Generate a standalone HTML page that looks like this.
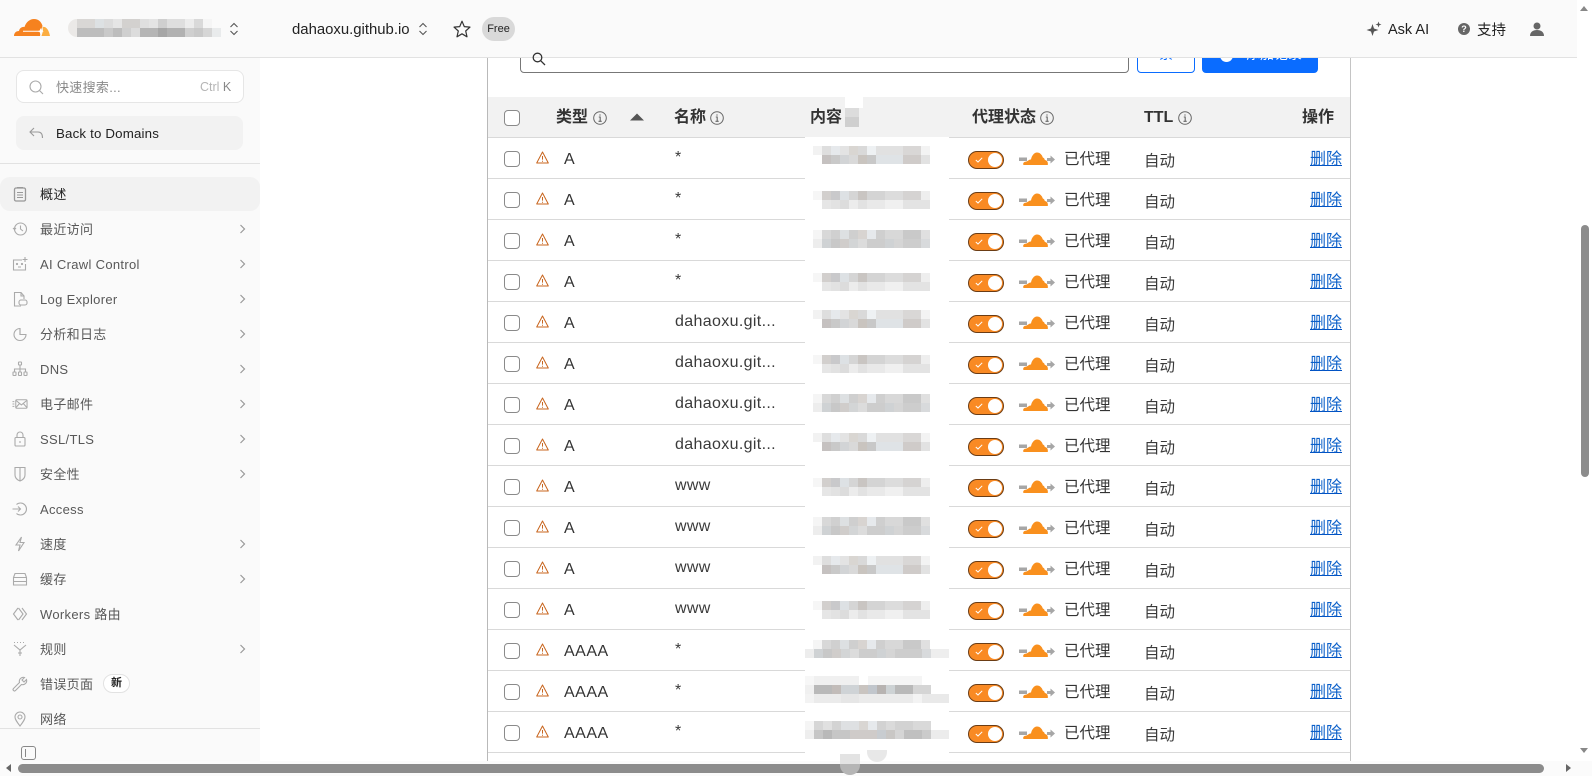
<!DOCTYPE html>
<html lang="zh"><head><meta charset="utf-8"><title>DNS</title>
<style>
*{box-sizing:border-box}
html,body{margin:0;width:1592px;height:776px;overflow:hidden;background:#fff;font-family:"Liberation Sans","Noto Sans CJK SC",sans-serif;color:#333}
.a{position:absolute}
svg{position:absolute;display:block;overflow:visible}
#side{left:0;top:0;width:260px;height:761px;background:#fafafa;overflow:hidden}
.mi{position:absolute;left:0;width:260px;height:34px;line-height:35px;padding-left:40px;font-size:13px;letter-spacing:.32px;color:#585858;white-space:nowrap}
.mi svg.ic{left:12px;top:9px;width:16px;height:16px;fill:none;stroke:#aaa;stroke-width:1.1}
.mi svg.ch{left:238px;top:12px;width:9px;height:10px;fill:none;stroke:#999;stroke-width:1.2}
#hd{left:260px;top:0;width:1317px;height:58px;background:#fafafa;border-bottom:1px solid #e2e2e2;z-index:5}
.th{position:absolute;top:97px;height:41px;left:488px;width:862px;background:#f2f2f2;border-bottom:1px solid #d9d9d9}
.tx{position:absolute;font-weight:700;font-size:16px;line-height:22px;top:107px;color:#333;white-space:nowrap}
.inf{width:14px;height:14px;top:111px;fill:none;stroke:#666;stroke-width:1}
.r{position:absolute;left:0;width:1351px;height:41px}
.r .ln{position:absolute;left:488px;width:862px;top:40px;height:1px;background:#d9d9d9}
.cb{position:absolute;left:504px;top:13px;width:16px;height:16px;border:1.3px solid #8a8a8a;border-radius:4px;background:#fff}
.t{position:absolute;white-space:nowrap;line-height:20px}
.ty{left:564px;top:12px;font-size:16px;letter-spacing:.5px;color:#333}
.nm{left:675px;top:10px;font-size:16px;letter-spacing:.35px;color:#3a3a3a}
.pr{left:1064px;top:12px;font-size:15.5px;color:#333}
.au{left:1144px;top:14px;font-size:15.5px;color:#3a3a3a}
.de{left:1310px;top:12px;font-size:16px;color:#0a5fc9;border-bottom:1.5px solid #0051c3;height:16px;line-height:20px}
.w{left:536px;top:13px;width:13px;height:13px;fill:none;stroke:#c8651e;stroke-width:1}
.tg{position:absolute;left:968px;top:13px;width:36px;height:18px;border-radius:9px;background:#f98a24;border:1.3px solid #6b3c14}
.tg i{position:absolute;right:1px;top:1px;width:14px;height:14px;border-radius:50%;background:#fff}
.tg svg{left:6px;top:5px;width:8px;height:6px;fill:none;stroke:#fff;stroke-width:1}
.cl{left:1019px;top:14px;width:36px;height:13px}
.m{position:absolute;left:805px;top:-1px;width:144px;height:43px;background-color:#fff;background-repeat:no-repeat}
.p1{background-image:linear-gradient(90deg,#f2f2f2 0 9px,#dedede 0 18px,#e6e9ec 0 27px,#e3e3e3 0 36px,#d9d6d2 0 45px,#d9d9d9 0 54px,#eef1f3 0 63px,#e1e1e1 0 90px,#d9d7d6 0 108px,#f3f3f3 0 117px),linear-gradient(90deg,#fff 0 9px,#c5c1c0 0 18px,#c9c9c9 0 27px,#d2d4d6 0 36px,#d9d9d9 0 45px,#c9c4bf 0 54px,#c8c8c8 0 63px,#dfe3e6 0 90px,#cfcbc9 0 108px,#e2e2e2 0 117px);background-size:117px 9px,117px 9px;background-position:8px 9px,8px 18px}
.p2{background-image:linear-gradient(90deg,#f6f6f6 0 9px,#d2cfcd 0 18px,#c9c9cb 0 27px,#dde1e4 0 36px,#d5d5d5 0 45px,#c9c5c2 0 54px,#d4d4d4 0 72px,#dcdcdc 0 90px,#d5d3d2 0 108px,#eeeeee 0 117px),linear-gradient(90deg,#fff 0 9px,#e6e6e6 0 18px,#e2e2e2 0 27px,#dcdcdc 0 36px,#ececec 0 45px,#e2e2e2 0 54px,#e9e9e9 0 72px,#f0f0f0 0 90px,#e3e3e3 0 117px);background-size:117px 9px,117px 9px;background-position:8px 13px,8px 22px}
.p3{background-image:linear-gradient(90deg,#f5f5f5 0 9px,#d8d8d8 0 18px,#d0d0d0 0 27px,#dde0e2 0 36px,#cfcfcf 0 45px,#d8d4d1 0 54px,#e6e9ec 0 63px,#cfcfcf 0 72px,#d8d8d8 0 90px,#c9c9c9 0 108px,#e0e0e0 0 117px),linear-gradient(90deg,#ededed 0 9px,#cfd2d4 0 18px,#c8c8c8 0 27px,#d0cdcb 0 36px,#d3d5d6 0 45px,#dcdcdc 0 54px,#cdcdcd 0 72px,#cfd2d4 0 81px,#d5d5d5 0 90px,#cdcdcd 0 108px,#d8dadc 0 117px);background-size:117px 9px,117px 9px;background-position:8px 11px,8px 20px}
.p6{background-image:linear-gradient(90deg,#f5f5f5 0 9px,#d8d8d8 0 18px,#d0d0d0 0 27px,#dde0e2 0 36px,#cfcfcf 0 45px,#d8d4d1 0 54px,#e6e9ec 0 63px,#cfcfcf 0 72px,#d8d8d8 0 90px,#c9c9c9 0 108px,#e0e0e0 0 117px),linear-gradient(90deg,#ededed 0 9px,#cfd2d4 0 18px,#c8c8c8 0 27px,#d0cdcb 0 36px,#d3d5d6 0 45px,#dcdcdc 0 54px,#cdcdcd 0 72px,#cfd2d4 0 81px,#d5d5d5 0 90px,#cdcdcd 0 117px,#d8dadc 0 126px,#eeeeee 0 144px);background-size:117px 9px,144px 9px;background-position:8px 11px,0 20px}
.p4{background-image:linear-gradient(90deg,#f7f7f7 0 9px,#f0f0f0 0 54px,#fff 0 63px,#f5f5f5 0 108px),linear-gradient(90deg,#f0f0f0 0 9px,#b9b9b9 0 27px,#c2bcb9 0 36px,#cfd3d6 0 54px,#c9c4c0 0 63px,#c1c6cc 0 72px,#b7b3b1 0 81px,#cdd2d4 0 90px,#b9b9b9 0 108px,#d5d5d5 0 126px),linear-gradient(90deg,#f3f3f3 0 9px,#ebebeb 0 36px,#e6e6e6 0 54px,#ebebeb 0 108px,#f3f3f3 0 117px,#e9e9e9 0 144px);background-size:117px 9px,126px 9px,144px 9px;background-position:0 6px,0 15px,0 24px}
.p5{background-image:linear-gradient(90deg,#f5f5f5 0 9px,#d6d6d6 0 18px,#e0e0e0 0 27px,#d3d3d3 0 36px,#dee0e2 0 54px,#d9d6d3 0 63px,#e6e9ec 0 72px,#d2d2d2 0 81px,#dadada 0 90px,#d2d2d2 0 108px,#d9d9d9 0 126px),linear-gradient(90deg,#eeeeee 0 9px,#c6c6c6 0 18px,#b9b9b9 0 27px,#c6c6c6 0 45px,#cfcbc9 0 72px,#c8ccd0 0 81px,#c9c7c5 0 90px,#d5d5d5 0 99px,#c0c0c0 0 117px,#cbcbcb 0 126px,#ececec 0 144px);background-size:126px 9px,144px 9px;background-position:0 10px,0 19px}
</style></head><body>
<svg width="0" height="0" style="position:absolute"><defs>
<symbol id="warn" viewBox="0 0 13 13"><path d="M6.500 1 12.300 12H.7Z" stroke-linejoin="round"/><path d="M6.500 5v3.600M6.500 9.800v1"/></symbol>
<symbol id="chk" viewBox="0 0 8 6"><path d="M.8 3 3 5 7.200.8"/></symbol>
<symbol id="cld" viewBox="0 0 36 13"><path d="M0 5.500h8v3.500H0zM28 6h4v3h-4z" fill="#a6a6a6"/><path d="M31.500 3.500 36 7.500l-4.500 4z" fill="#a6a6a6"/><path d="M4.500 13c-.8-1.500 0-3 2-3.300 1.500-.2 2.500-1 3.500-1.700.6-.4 1.300-.6 2-.5C12.600 4 15 .5 18 .5c3 0 5.200 2.500 5.800 5 1.200.4 1.800 1.200 2 2.500 1.700.2 3.500 1.500 3 5Z" fill="#f9901e"/></symbol>
<symbol id="chv" viewBox="0 0 9 10"><path d="M2.500 1 6.500 5l-4 4"/></symbol>
<symbol id="info" viewBox="0 0 14 14"><circle cx="7" cy="7" r="6.300"/><path d="M5.800 6h1.400v4.200M5.500 10.300h3.200M7 3.400v1.200" stroke-width="1.100"/></symbol>
<symbol id="ud" viewBox="0 0 10 14"><path d="M1.500 5 5 1.500 8.500 5M1.500 9 5 12.500 8.500 9"/></symbol>
</defs></svg>

<!-- main background content -->
<div class="a" style="left:487px;top:57px;width:1px;height:704px;background:#b9b9b9"></div>
<div class="a" style="left:1350px;top:57px;width:1px;height:704px;background:#c4c4c4"></div>
<div class="a" style="left:520px;top:40px;width:609px;height:33px;border:1.2px solid #777;border-radius:4px;background:#fff"></div>
<svg class="a" style="left:531px;top:51px;width:16px;height:16px;fill:none;stroke:#333;stroke-width:1.300;z-index:6" viewBox="0 0 16 16"><circle cx="6.500" cy="6.500" r="4.300"/><path d="M9.800 9.800 14 14"/></svg>
<div class="a" style="left:1137px;top:40px;width:58px;height:33px;border:1.200px solid #0a6cff;border-radius:4px;background:#fff;text-align:center;color:#0a6cff;font-size:14px;line-height:26px;overflow:hidden">索</div>
<div class="a" style="left:1202px;top:40px;width:116px;height:33px;background:#0a6cff;border-radius:4px;color:#fff;font-size:14px;line-height:28px;padding-left:44px;overflow:hidden;white-space:nowrap">添加记录<span class="a" style="left:18px;top:9px;width:13px;height:13px;border-radius:50%;background:#fff"></span></div>

<div class="th"></div>
<div class="a" style="left:504px;top:110px;width:16px;height:16px;border:1.300px solid #8a8a8a;border-radius:4px;background:#fff"></div>
<div class="tx" style="left:556px">类型</div>
<svg class="inf" style="left:593px"><use href="#info"/></svg>
<svg class="a" style="left:630px;top:113px;width:14px;height:8px" viewBox="0 0 14 8"><path d="M7 .5 14 7.500H0Z" fill="#555"/></svg>
<div class="tx" style="left:674px">名称</div>
<svg class="inf" style="left:710px"><use href="#info"/></svg>
<div class="tx" style="left:810px">内容</div>
<div class="a" style="left:845px;top:92px;width:18px;height:16px;background:#fff"></div>
<div class="a" style="left:845px;top:108px;width:14px;height:19px;background:linear-gradient(#dcdcdc 0 9px,#cfcfcf 0)"></div>
<div class="tx" style="left:972px">代理状态</div>
<svg class="inf" style="left:1040px"><use href="#info"/></svg>
<div class="tx" style="left:1144px">TTL</div>
<svg class="inf" style="left:1178px"><use href="#info"/></svg>
<div class="tx" style="left:1302px">操作</div>

<div class="r" style="top:138px"><div class="ln"></div><div class="m p1"></div><div class="cb"></div><svg class="w"><use href="#warn"/></svg><div class="t ty">A</div><div class="t nm">*</div><div class="tg"><svg><use href="#chk"/></svg><i></i></div><svg class="cl"><use href="#cld"/></svg><div class="t pr">已代理</div><div class="t au">自动</div><div class="t de">删除</div></div>
<div class="r" style="top:179px"><div class="ln"></div><div class="m p2"></div><div class="cb"></div><svg class="w"><use href="#warn"/></svg><div class="t ty">A</div><div class="t nm">*</div><div class="tg"><svg><use href="#chk"/></svg><i></i></div><svg class="cl"><use href="#cld"/></svg><div class="t pr">已代理</div><div class="t au">自动</div><div class="t de">删除</div></div>
<div class="r" style="top:220px"><div class="ln"></div><div class="m p3"></div><div class="cb"></div><svg class="w"><use href="#warn"/></svg><div class="t ty">A</div><div class="t nm">*</div><div class="tg"><svg><use href="#chk"/></svg><i></i></div><svg class="cl"><use href="#cld"/></svg><div class="t pr">已代理</div><div class="t au">自动</div><div class="t de">删除</div></div>
<div class="r" style="top:261px"><div class="ln"></div><div class="m p2"></div><div class="cb"></div><svg class="w"><use href="#warn"/></svg><div class="t ty">A</div><div class="t nm">*</div><div class="tg"><svg><use href="#chk"/></svg><i></i></div><svg class="cl"><use href="#cld"/></svg><div class="t pr">已代理</div><div class="t au">自动</div><div class="t de">删除</div></div>
<div class="r" style="top:302px"><div class="ln"></div><div class="m p1"></div><div class="cb"></div><svg class="w"><use href="#warn"/></svg><div class="t ty">A</div><div class="t nm">dahaoxu.git...</div><div class="tg"><svg><use href="#chk"/></svg><i></i></div><svg class="cl"><use href="#cld"/></svg><div class="t pr">已代理</div><div class="t au">自动</div><div class="t de">删除</div></div>
<div class="r" style="top:343px"><div class="ln"></div><div class="m p2"></div><div class="cb"></div><svg class="w"><use href="#warn"/></svg><div class="t ty">A</div><div class="t nm">dahaoxu.git...</div><div class="tg"><svg><use href="#chk"/></svg><i></i></div><svg class="cl"><use href="#cld"/></svg><div class="t pr">已代理</div><div class="t au">自动</div><div class="t de">删除</div></div>
<div class="r" style="top:384px"><div class="ln"></div><div class="m p3"></div><div class="cb"></div><svg class="w"><use href="#warn"/></svg><div class="t ty">A</div><div class="t nm">dahaoxu.git...</div><div class="tg"><svg><use href="#chk"/></svg><i></i></div><svg class="cl"><use href="#cld"/></svg><div class="t pr">已代理</div><div class="t au">自动</div><div class="t de">删除</div></div>
<div class="r" style="top:425px"><div class="ln"></div><div class="m p1"></div><div class="cb"></div><svg class="w"><use href="#warn"/></svg><div class="t ty">A</div><div class="t nm">dahaoxu.git...</div><div class="tg"><svg><use href="#chk"/></svg><i></i></div><svg class="cl"><use href="#cld"/></svg><div class="t pr">已代理</div><div class="t au">自动</div><div class="t de">删除</div></div>
<div class="r" style="top:466px"><div class="ln"></div><div class="m p2"></div><div class="cb"></div><svg class="w"><use href="#warn"/></svg><div class="t ty">A</div><div class="t nm">www</div><div class="tg"><svg><use href="#chk"/></svg><i></i></div><svg class="cl"><use href="#cld"/></svg><div class="t pr">已代理</div><div class="t au">自动</div><div class="t de">删除</div></div>
<div class="r" style="top:507px"><div class="ln"></div><div class="m p3"></div><div class="cb"></div><svg class="w"><use href="#warn"/></svg><div class="t ty">A</div><div class="t nm">www</div><div class="tg"><svg><use href="#chk"/></svg><i></i></div><svg class="cl"><use href="#cld"/></svg><div class="t pr">已代理</div><div class="t au">自动</div><div class="t de">删除</div></div>
<div class="r" style="top:548px"><div class="ln"></div><div class="m p1"></div><div class="cb"></div><svg class="w"><use href="#warn"/></svg><div class="t ty">A</div><div class="t nm">www</div><div class="tg"><svg><use href="#chk"/></svg><i></i></div><svg class="cl"><use href="#cld"/></svg><div class="t pr">已代理</div><div class="t au">自动</div><div class="t de">删除</div></div>
<div class="r" style="top:589px"><div class="ln"></div><div class="m p2"></div><div class="cb"></div><svg class="w"><use href="#warn"/></svg><div class="t ty">A</div><div class="t nm">www</div><div class="tg"><svg><use href="#chk"/></svg><i></i></div><svg class="cl"><use href="#cld"/></svg><div class="t pr">已代理</div><div class="t au">自动</div><div class="t de">删除</div></div>
<div class="r" style="top:630px"><div class="ln"></div><div class="m p6"></div><div class="cb"></div><svg class="w"><use href="#warn"/></svg><div class="t ty">AAAA</div><div class="t nm">*</div><div class="tg"><svg><use href="#chk"/></svg><i></i></div><svg class="cl"><use href="#cld"/></svg><div class="t pr">已代理</div><div class="t au">自动</div><div class="t de">删除</div></div>
<div class="r" style="top:671px"><div class="ln"></div><div class="m p4"></div><div class="cb"></div><svg class="w"><use href="#warn"/></svg><div class="t ty">AAAA</div><div class="t nm">*</div><div class="tg"><svg><use href="#chk"/></svg><i></i></div><svg class="cl"><use href="#cld"/></svg><div class="t pr">已代理</div><div class="t au">自动</div><div class="t de">删除</div></div>
<div class="r" style="top:712px"><div class="ln"></div><div class="m p5"></div><div class="cb"></div><svg class="w"><use href="#warn"/></svg><div class="t ty">AAAA</div><div class="t nm">*</div><div class="tg"><svg><use href="#chk"/></svg><i></i></div><svg class="cl"><use href="#cld"/></svg><div class="t pr">已代理</div><div class="t au">自动</div><div class="t de">删除</div></div>

<!-- top header -->
<div class="a" id="hd">
<div class="a" style="left:32px;top:20px;font-size:14.900px;line-height:20px;color:#222;white-space:nowrap">dahaoxu.github.io</div>
<svg style="left:158px;top:22px;width:10px;height:14px;fill:none;stroke:#555;stroke-width:1.100"><use href="#ud"/></svg>
<svg style="left:193px;top:20px;width:18px;height:18px;fill:none;stroke:#333;stroke-width:1.200" viewBox="0 0 18 18"><path d="M9 1.200 11.300 6.600 17 7.100 12.700 11 14 16.800 9 13.800 4 16.800 5.300 11 1 7.100 6.700 6.600Z" stroke-linejoin="round"/></svg>
<div class="a" style="left:222px;top:17px;width:33px;height:24px;border-radius:12px;background:#d9d9d9;font-size:11px;line-height:25px;text-align:center;color:#222">Free</div>
<svg style="left:1106px;top:21px;width:16px;height:16px;fill:#555" viewBox="0 0 16 16"><path d="M6.500 3 8 7.500 12.500 9 8 10.500 6.500 15 5 10.500.5 9 5 7.500ZM12.500.5l.8 2.200 2.200.8-2.200.8-.8 2.200-.8-2.200-2.200-.8 2.200-.8Z"/></svg>
<div class="a" style="left:1128px;top:20px;font-size:14.500px;line-height:20px;color:#222;white-space:nowrap">Ask AI</div>
<div class="a" style="left:1198px;top:23px;width:12px;height:12px;border-radius:50%;background:#666;color:#fff;font-size:9px;font-weight:700;line-height:12px;text-align:center">?</div>
<div class="a" style="left:1217px;top:20px;font-size:14.500px;line-height:22px;color:#222;white-space:nowrap">支持</div>
<svg style="left:1270px;top:22px;width:14px;height:14px;fill:#666" viewBox="0 0 14 14"><circle cx="7" cy="4" r="3.500"/><path d="M0 14c0-4 3-6 7-6s7 2 7 6Z"/></svg>
</div>

<!-- sidebar -->
<div class="a" id="side">
<div class="a" style="left:0;top:57px;width:260px;height:1px;background:#e2e2e2"></div>
<svg style="left:14px;top:19px;width:36px;height:17px" viewBox="0 0 36 17"><path d="M0 17C0 14 2 12 5 12 5.500 9.500 7.500 7.500 10.500 8 12 3 16 0 20 0c4.500 0 7.500 3 8.500 7L27 11l-1 6Z" fill="#f6821f"/><path d="M28.500 8C32 7 35 11 36 17H27.500L29 12Z" fill="#fbad41"/><path d="M9 12.300H26" stroke="#fff" stroke-width="1"/><path d="M26.500 9l.8 2.500 2.500.8-2.500.8-.8 2.700-.8-2.700-2.500-.8 2.500-.8Z" fill="#fff"/></svg>
<div class="a" style="left:68px;top:19px;width:14px;height:18px;border-radius:9px 0 0 9px;background:#ebe9e7"></div>
<div class="a" style="left:77px;top:19px;width:144px;height:9px;background:linear-gradient(90deg,#d9d7d5 0 18px,#dde1e3 0 27px,#dcdcdc 0 36px,#e5e5e5 0 45px,#d3d1cf 0 63px,#dfdfdf 0 72px,#e4e4e4 0 81px,#cfcfcf 0 90px,#dedede 0 108px,#ececec 0 117px,#d9d9d9 0 126px,#f5f5f5 0 135px,#fafafa 0 144px)"></div>
<div class="a" style="left:77px;top:28px;width:144px;height:9px;background:linear-gradient(90deg,#bdbdbd 0 27px,#c9c9c9 0 36px,#bdbdbd 0 45px,#cfcfcf 0 54px,#dcdcdc 0 63px,#b5b5b5 0 81px,#a6a6a6 0 90px,#b1b1b1 0 108px,#cfcfcf 0 117px,#c9c9c9 0 126px,#d6d6d6 0 135px,#e9ebec 0 144px)"></div>
<svg style="left:229px;top:22px;width:10px;height:14px;fill:none;stroke:#555;stroke-width:1.100"><use href="#ud"/></svg>

<div class="a" style="left:15.500px;top:70px;width:228px;height:33px;background:#fff;border:1px solid #e6e6e6;border-radius:8px"></div>
<svg style="left:29px;top:80px;width:15px;height:15px;fill:none;stroke:#aaa;stroke-width:1.100" viewBox="0 0 15 15"><circle cx="6.500" cy="6.500" r="5.500"/><path d="M10.500 10.500 14 14"/></svg>
<div class="a" style="left:56px;top:79px;font-size:13px;letter-spacing:.3px;line-height:18px;color:#8a8a8a;white-space:nowrap">快速搜索...</div>
<div class="a" style="left:200px;top:78px;font-size:12.500px;line-height:18px;color:#b5b5b5;white-space:nowrap">Ctrl <span style="color:#888">K</span></div>
<div class="a" style="left:16px;top:116px;width:227px;height:34px;background:#f2f2f2;border-radius:8px"></div>
<svg style="left:29px;top:127px;width:15px;height:12px;fill:none;stroke:#999;stroke-width:1.100" viewBox="0 0 15 12"><path d="M5 1 1 5l4 4M1 5h8c3 0 4.500 2 4.500 6"/></svg>
<div class="a" style="left:56px;top:125px;font-size:13.300px;letter-spacing:.17px;line-height:18px;color:#222;white-space:nowrap">Back to Domains</div>
<div class="a" style="left:0;top:163px;width:260px;height:1px;background:#e2e2e2"></div>

<div class="mi" style="top:177px;background:#f2f2f2;border-radius:10px;color:#222"><svg class="ic" viewBox="0 0 16 16"><rect x="2.500" y="2" width="11" height="13" rx="1.500" stroke-width="1.300" stroke="#999"/><path d="M5 1.500h6M5 6.500h6M5 9h6M5 11.500h6" stroke="#999"/></svg>概述</div>
<div class="mi" style="top:212px"><svg class="ic" viewBox="0 0 16 16"><circle cx="8.500" cy="8" r="6"/><path d="M8.500 4.500V8l2.500 2M1 7l1.500 1.500L4 7"/></svg>最近访问<svg class="ch"><use href="#chv"/></svg></div>
<div class="mi" style="top:247px"><svg class="ic" viewBox="0 0 16 16"><path d="M10 4H1.500v10h12V8"/><circle cx="5" cy="8" r=".6"/><circle cx="10" cy="8" r=".6"/><path d="M6 11h3M13 1v5M10.500 3.500h5"/></svg>AI Crawl Control<svg class="ch"><use href="#chv"/></svg></div>
<div class="mi" style="top:282px"><svg class="ic" viewBox="0 0 16 16"><path d="M9 15H2.500V1.500H9L12 5v3"/><path d="M9 1.500V5h3"/><rect x="7" y="9" width="8" height="5" rx="2"/></svg>Log Explorer<svg class="ch"><use href="#chv"/></svg></div>
<div class="mi" style="top:317px"><svg class="ic" viewBox="0 0 16 16"><path d="M8 2.500a6 6 0 1 0 6 6H8Z"/><path d="M8 2.500V8.500H14"/></svg>分析和日志<svg class="ch"><use href="#chv"/></svg></div>
<div class="mi" style="top:352px"><svg class="ic" viewBox="0 0 16 16"><rect x="6.500" y="1" width="3" height="3" rx=".5"/><rect x="1" y="11" width="3" height="3.500" rx=".5"/><rect x="6.500" y="11" width="3" height="3.500" rx=".5"/><rect x="12" y="11" width="3" height="3.500" rx=".5"/><path d="M8 4v7M2.500 11V8h11v3"/></svg>DNS<svg class="ch"><use href="#chv"/></svg></div>
<div class="mi" style="top:387px"><svg class="ic" viewBox="0 0 17 16"><rect x="4" y="3.500" width="12" height="9" rx="1"/><path d="M4 4l6 5 6-5M4 12l4-4.500M16 12l-4-4.500M.5 5.500h2M.5 8h2M.5 10.500h2"/></svg>电子邮件<svg class="ch"><use href="#chv"/></svg></div>
<div class="mi" style="top:422px"><svg class="ic" viewBox="0 0 16 16"><rect x="3" y="6.500" width="10" height="8.500" rx="1"/><path d="M5 6.500V4a3 3 0 0 1 6 0v2.500M8 10v2"/></svg>SSL/TLS<svg class="ch"><use href="#chv"/></svg></div>
<div class="mi" style="top:457px"><svg class="ic" viewBox="0 0 16 16"><path d="M3 1.500h10V9c0 3-2.500 5-5 6-2.500-1-5-3-5-6Z"/><path d="M8 1.500V15"/></svg>安全性<svg class="ch"><use href="#chv"/></svg></div>
<div class="mi" style="top:492px"><svg class="ic" viewBox="0 0 16 16"><path d="M.5 8h8M6 5.500 8.500 8 6 10.500M4.500 3.500a6 6 0 1 1 0 9"/></svg>Access</div>
<div class="mi" style="top:527px"><svg class="ic" viewBox="0 0 16 16"><path d="M9.500 1 4 9h4l-1.500 6L12 6.500H8Z"/></svg>速度<svg class="ch"><use href="#chv"/></svg></div>
<div class="mi" style="top:562px"><svg class="ic" viewBox="0 0 16 16"><path d="M3 2.500h10l1.500 4v7.500h-13V6.500ZM1.500 6.500h13M1.500 10.500h13"/></svg>缓存<svg class="ch"><use href="#chv"/></svg></div>
<div class="mi" style="top:597px"><svg class="ic" viewBox="0 0 16 16"><path d="M6 2 1.500 8 6 14M10 2l4.500 6L10 14M6.500 2l4.500 6-4.500 6"/></svg>Workers 路由</div>
<div class="mi" style="top:632px"><svg class="ic" viewBox="0 0 16 16"><path d="M2 1.500h1M5 1.500h1M8 1.500h1M11 1.500h1M2 4l6 5 6-5M8 9v6M6 12h4"/></svg>规则<svg class="ch"><use href="#chv"/></svg></div>
<div class="mi" style="top:667px"><svg class="ic" viewBox="0 0 16 16"><path d="M14.500 3.500 12 6 10 4l2.500-2.500a4 4 0 0 0-5 5L1.500 12.500a1.400 1.400 0 0 0 2 2l6-6a4 4 0 0 0 5-5Z"/></svg>错误页面<div class="a" style="left:103px;top:7px;width:27px;height:19px;border:1px solid #e2e2e2;border-radius:10px;background:#fff;color:#222;font-size:11px;font-weight:700;line-height:17px;text-align:center;letter-spacing:0">新</div></div>
<div class="mi" style="top:702px"><svg class="ic" viewBox="0 0 16 16"><path d="M8 15C5 11 3 8.500 3 6a5 5 0 0 1 10 0c0 2.500-2 5-5 9Z"/><circle cx="8" cy="6" r="2"/></svg>网络</div>
<div class="a" style="left:0;top:728px;width:260px;height:33px;background:#fafafa;border-top:1px solid #e2e2e2"></div>
<div class="a" style="left:21px;top:746px;width:15px;height:14px;border:1.200px solid #888;border-radius:3px"><span class="a" style="left:3px;top:2px;width:1px;height:8px;background:#888"></span></div>
</div>

<!-- scrollbars -->
<div class="a" style="left:1577px;top:0;width:15px;height:776px;background:#fff;z-index:6"></div>
<div class="a" style="left:0;top:761px;width:1592px;height:15px;background:#fbfbfb;z-index:6"></div>
<div class="a" style="left:1581px;top:225px;width:8px;height:252px;background:#8c8c8c;border-radius:4px;z-index:7"></div>
<div class="a" style="left:18px;top:764px;width:1526px;height:9px;background:#8c8c8c;border-radius:4.500px;z-index:7"></div>
<div class="a" style="left:6px;top:764px;width:0;height:0;border:4.500px solid transparent;border-left:0;border-right:5px solid #666;z-index:7"></div>
<div class="a" style="left:1566px;top:764px;width:0;height:0;border:4.500px solid transparent;border-right:0;border-left:5px solid #666;z-index:7"></div>
<div class="a" style="left:1580px;top:6px;width:0;height:0;border:4.500px solid transparent;border-top:0;border-bottom:5px solid #888;z-index:7"></div>
<div class="a" style="left:1580px;top:748px;width:0;height:0;border:4.500px solid transparent;border-bottom:0;border-top:5px solid #888;z-index:7"></div>
<!-- smears -->
<div class="a" style="left:867px;top:750px;width:20px;height:12px;background:#e8e8e8;border-radius:0 0 10px 10px;z-index:8"></div>
<div class="a" style="left:840px;top:754px;width:20px;height:21px;background:linear-gradient(#e3e3e3 0 10px,#b5b5b5 0);border-radius:0 0 10px 10px;z-index:8"></div>
</body></html>
